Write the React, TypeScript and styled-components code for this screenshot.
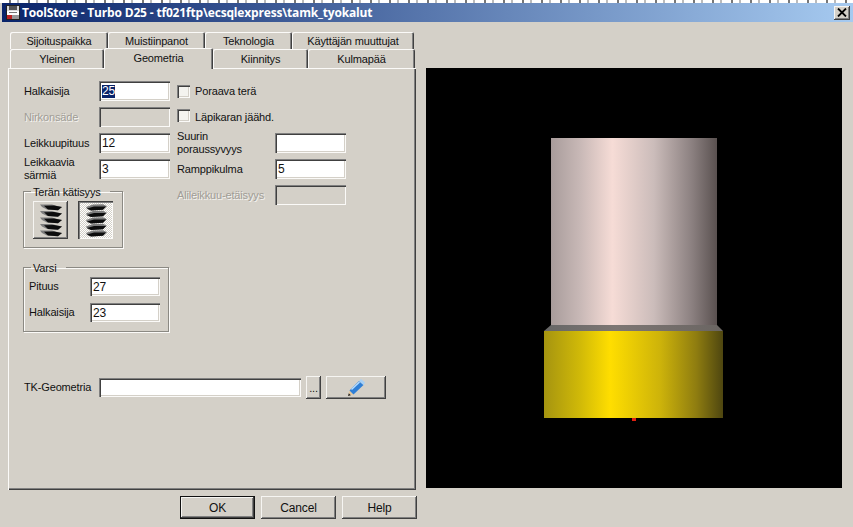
import React from "react";
import styled, { createGlobalStyle, css } from "styled-components";

const Global = createGlobalStyle`
  html, body { margin: 0; padding: 0; background: #d4d0c8; }
  * { box-sizing: border-box; }
`;

const FONT = `"Liberation Sans", Arial, sans-serif`;

const raised = css`
  box-shadow: inset -1px -1px 0 #404040, inset 1px 1px 0 #f6f5f2, inset -2px -2px 0 #808080, inset 2px 2px 0 #d4d0c8;
`;

const sunken = css`
  box-shadow: inset 1px 1px 0 #808080, inset 2px 2px 0 #404040, inset -1px -1px 0 #fbfaf8, inset -2px -2px 0 #d4d0c8;
`;

const Root = styled.div`
  width: 853px;
  height: 527px;
  overflow: hidden;
  background: #d4d0c8;
  font-family: ${FONT};
  font-size: 11px;
  letter-spacing: -0.15px;
  color: #111;
  display: flex;
  flex-direction: column;
`;

const TopStrip = styled.div`
  height: 3px;
  background: repeating-linear-gradient(90deg, #fff 0 9px, #777 9px 11px, #fff 11px 17px, #bbb 17px 19px);
  flex: none;
`;

const TitleBar = styled.div`
  height: 19px;
  flex: none;
  display: flex;
  align-items: center;
  margin-left: 2px;
  padding: 0 4px;
  background: linear-gradient(90deg, #0a246a 0%, #a6caf0 100%);
  color: #fff;
`;

const TitleText = styled.div`
  font-family: "Open Sans", sans-serif;
  font-size: 12px;
  letter-spacing: -0.17px;
  font-weight: 700;
  margin-left: 2px;
  white-space: nowrap;
  flex: 1;
`;

const CloseButton = styled.div`
  width: 16px;
  height: 14px;
  background: #d4d0c8;
  display: flex;
  align-items: center;
  justify-content: center;
  margin-right: -1px;
  ${raised}
`;

const Body = styled.div`
  flex: 1;
  display: flex;
  min-height: 0;
`;

const LeftPane = styled.div`
  width: 426px;
  flex: none;
  padding: 10px 0 0 8px;
`;

const TabRow = styled.div<{ $h: number }>`
  display: flex;
  height: ${(p) => p.$h}px;
  padding-left: 2px;
`;

const Tab = styled.div<{ $w: number; $active?: boolean }>`
  width: ${(p) => p.$w}px;
  flex: none;
  display: flex;
  align-items: center;
  justify-content: center;
  background: #d4d0c8;
  border-radius: 2px 2px 0 0;
  box-shadow: inset 1px 1px 0 #fbfaf8, inset -1px 0 0 #404040, inset -2px 0 0 #808080;
  white-space: nowrap;
  ${(p) =>
    p.$active &&
    css`
      height: 21px;
      margin-top: -1px;
      position: relative;
      z-index: 2;
      padding-bottom: 2px;
    `}
`;

const Panel = styled.div`
  width: 408px;
  height: 422px;
  padding: 13px 0 0 16px;
  background: #d4d0c8;
  box-shadow: inset 1px 1px 0 #fbfaf8, inset -1px -1px 0 #404040, inset -2px -2px 0 #808080;
`;

const Columns = styled.div`
  display: grid;
  grid-template-columns: 147px 170px;
  column-gap: 6px;
  align-items: start;
`;

const Column = styled.div`
  display: flex;
  flex-direction: column;
  gap: 6px;
`;

const Row = styled.div<{ $h?: number }>`
  display: flex;
  align-items: center;
  height: ${(p) => p.$h ?? 20}px;
`;

const Label = styled.div<{ $w: number; $disabled?: boolean }>`
  width: ${(p) => p.$w}px;
  flex: none;
  line-height: 13px;
  white-space: nowrap;
  ${(p) =>
    p.$disabled &&
    css`
      color: #a09d96;
      text-shadow: 1px 1px 0 #f4f3f0;
    `}
`;

const TextBox = styled.div<{ $w?: number; $h?: number; $disabled?: boolean }>`
  width: ${(p) => p.$w ?? 71}px;
  height: ${(p) => p.$h ?? 20}px;
  flex: none;
  padding: 3px 0 0 3px;
  line-height: 14px;
  font-size: 12px;
  background: ${(p) => (p.$disabled ? "#d4d0c8" : "#fff")};
  ${sunken}
`;

const Selected = styled.span`
  background: #0a246a;
  color: #fff;
  display: inline-block;
  line-height: 13px;
`;

const CheckRow = styled.div<{ $up?: number }>`
  display: flex;
  align-items: center;
  gap: 5px;
  height: 20px;
  & > div {
    margin-top: ${(p) => -(p.$up ?? 0)}px;
  }
`;

const CheckBox = styled.div`
  width: 13px;
  height: 13px;
  flex: none;
  background: #f4f3ef;
  ${sunken}
`;

const Group = styled.fieldset<{ $w: number; $h: number; $top: number }>`
  width: ${(p) => p.$w}px;
  height: ${(p) => p.$h}px;
  margin: ${(p) => p.$top}px 0 0 -1px;
  padding: 3px 0 0 9px;
  border: 1px solid #8b8983;
  border-radius: 0;
  box-shadow: 1px 1px 0 #fbfaf8, inset 1px 1px 0 #fbfaf8;
`;

const Legend = styled.legend`
  margin-left: -2px;
  padding: 1px 9px 0 2px;
  line-height: 12px;
`;

const IconRow = styled.div`
  display: flex;
  gap: 10px;
`;

const IconToggle = styled.div<{ $pressed?: boolean }>`
  width: 35px;
  height: 38px;
  display: flex;
  align-items: center;
  justify-content: center;
  ${(p) =>
    p.$pressed
      ? css`
          background: repeating-conic-gradient(#fff 0 25%, #d4d0c8 0 50%) 0 0 / 2px 2px;
          box-shadow: inset 1px 1px 0 #404040, inset 2px 2px 0 #808080, inset -1px -1px 0 #fbfaf8;
        `
      : raised}
`;

const VarsiRows = styled.div`
  display: flex;
  flex-direction: column;
  gap: 7px;
  margin-left: -4px;
`;

const BottomRow = styled.div`
  display: flex;
  align-items: center;
  height: 23px;
  margin-top: 44px;
`;

const SmallButton = styled.div<{ $w: number; $ml: number }>`
  width: ${(p) => p.$w}px;
  height: 23px;
  margin-left: ${(p) => p.$ml}px;
  display: flex;
  align-items: center;
  justify-content: center;
  ${raised}
`;

const Footer = styled.div`
  width: 409px;
  margin-top: 6px;
  display: flex;
  justify-content: flex-end;
  gap: 6px;
`;

const DialogButton = styled.div<{ $default?: boolean }>`
  width: 75px;
  height: 23px;
  display: flex;
  align-items: center;
  justify-content: center;
  font-size: 12px;
  ${raised}
  ${(p) =>
    p.$default &&
    css`
      border: 1px solid #111;
    `}
`;

const Viewport = styled.div`
  width: 416px;
  height: 420px;
  margin-top: 46px;
  background: #000;
  flex: none;
`;

const AppIcon = () => (
  <svg width="14" height="15" viewBox="0 0 14 15">
    <rect x="0.5" y="0.5" width="13" height="14" fill="#d8d8d8" stroke="#222" />
    <rect x="3" y="1" width="8" height="4" fill="#555" />
    <rect x="1" y="6" width="12" height="4" fill="#fff" />
    <rect x="3" y="7" width="8" height="1" fill="#777" />
    <rect x="1" y="10" width="5" height="4" fill="#b22" />
    <rect x="6" y="10" width="7" height="4" fill="#999" />
  </svg>
);

const CloseIcon = () => (
  <svg width="10" height="9" viewBox="0 0 10 9">
    <path d="M1 0.5 L9 8.5 M9 0.5 L1 8.5" stroke="#000" strokeWidth="1.8" />
  </svg>
);

const Helix = ({ flip }: { flip?: boolean }) => {
  const tops = [0, 6.5, 13, 19.5, 26];
  return (
    <svg width="24" height="33" viewBox="0 0 24 33">
      {tops.map((y) => (
        <g key={y} transform={`translate(0 ${y})`}>
          {flip ? (
            <>
              <path d="M2 3 L9 0.4 L19 0.2 L23 2.2 L19 5.8 L7 6.6 L3 5 Z" fill="#7c7c7c" />
              <path d="M3 4.4 L10 2.4 L22 2.6 L19 5.8 L7 6.6 Z" fill="#0c0c0c" />
            </>
          ) : (
            <>
              <path d="M1 0.4 L13 0.6 L18 2 L23 3 L19 6.2 L8 5.6 L3 3 Z" fill="#7c7c7c" />
              <path d="M5 1.8 L15 1.6 L23 3 L19 6.2 L9 5.6 Z" fill="#0c0c0c" />
            </>
          )}
        </g>
      ))}
    </svg>
  );
};

const Pencil = () => (
  <svg width="20" height="20" viewBox="0 0 20 20">
    <path d="M2 18 L3.5 12.5 L7.5 16.5 Z" fill="#e4c9a0" />
    <path d="M2 18 L2.8 15.2 L4.8 17.2 Z" fill="#222" />
    <path d="M3.5 12.5 L13 3 L17.5 7 L7.5 16.5 Z" fill="#2f7fd6" />
    <path d="M5.5 11.5 L13.5 4" stroke="#b4dcff" strokeWidth="1.5" />
    <path d="M13 3 L15 1 L19 4.6 L17.5 7 Z" fill="#a8d0f4" />
  </svg>
);

const Tool = () => (
  <svg width="416" height="420" viewBox="0 0 416 420" role="img" aria-label="Tool preview">
    <defs>
      <linearGradient id="shank" x1="0" x2="1" y1="0" y2="0">
        <stop offset="0" stopColor="#a89c9b" />
        <stop offset="0.18" stopColor="#c9b9b7" />
        <stop offset="0.37" stopColor="#f6dcd6" />
        <stop offset="0.62" stopColor="#cbbcba" />
        <stop offset="0.85" stopColor="#8b8080" />
        <stop offset="1" stopColor="#5a5150" />
      </linearGradient>
      <linearGradient id="chamfer" x1="0" x2="1" y1="0" y2="0">
        <stop offset="0" stopColor="#666" />
        <stop offset="0.4" stopColor="#7d7673" />
        <stop offset="1" stopColor="#6a6562" />
      </linearGradient>
      <linearGradient id="body" x1="0" x2="1" y1="0" y2="0">
        <stop offset="0" stopColor="#a59410" />
        <stop offset="0.2" stopColor="#d0b908" />
        <stop offset="0.37" stopColor="#ffde00" />
        <stop offset="0.65" stopColor="#cdb30a" />
        <stop offset="0.85" stopColor="#8f7d10" />
        <stop offset="1" stopColor="#4e4610" />
      </linearGradient>
    </defs>
    <rect x="125" y="70" width="166" height="187" fill="url(#shank)" />
    <polygon points="125,257 291,257 297,263 118,263" fill="url(#chamfer)" />
    <rect x="118" y="263" width="179" height="87" fill="url(#body)" />
    <rect x="206" y="350" width="4" height="3" fill="#e02010" />
  </svg>
);

export default function App() {
  return (
    <Root>
      <Global />
      <TopStrip />
      <TitleBar>
        <AppIcon />
        <TitleText>ToolStore - Turbo D25 - tf021ftp\ecsqlexpress\tamk_tyokalut</TitleText>
        <CloseButton>
          <CloseIcon />
        </CloseButton>
      </TitleBar>
      <Body>
        <LeftPane>
          <TabRow $h={17}>
            <Tab $w={98}>Sijoituspaikka</Tab>
            <Tab $w={97}>Muistiinpanot</Tab>
            <Tab $w={87}>Teknologia</Tab>
            <Tab $w={122}>Käyttäjän muuttujat</Tab>
          </TabRow>
          <TabRow $h={19}>
            <Tab $w={94}>Yleinen</Tab>
            <Tab $w={109} $active>
              Geometria
            </Tab>
            <Tab $w={95}>Kiinnitys</Tab>
            <Tab $w={107}>Kulmapää</Tab>
          </TabRow>
          <Panel>
            <Columns>
              <Column>
                <Row>
                  <Label $w={75}>Halkaisija</Label>
                  <TextBox>
                    <Selected>25</Selected>
                  </TextBox>
                </Row>
                <Row>
                  <Label $w={75} $disabled>
                    Nirkonsäde
                  </Label>
                  <TextBox $disabled />
                </Row>
                <Row>
                  <Label $w={75}>Leikkuupituus</Label>
                  <TextBox>12</TextBox>
                </Row>
                <Row>
                  <Label $w={75}>
                    Leikkaavia
                    <br />
                    särmiä
                  </Label>
                  <TextBox>3</TextBox>
                </Row>
                <Group $w={100} $h={63} $top={0}>
                  <Legend>Terän kätisyys</Legend>
                  <IconRow>
                    <IconToggle>
                      <Helix />
                    </IconToggle>
                    <IconToggle $pressed>
                      <Helix flip />
                    </IconToggle>
                  </IconRow>
                </Group>
              </Column>
              <Column>
                <CheckRow>
                  <CheckBox />
                  Poraava terä
                </CheckRow>
                <CheckRow $up={3}>
                  <CheckBox />
                  Läpikaran jäähd.
                </CheckRow>
                <Row>
                  <Label $w={98}>
                    Suurin
                    <br />
                    poraussyvyys
                  </Label>
                  <TextBox />
                </Row>
                <Row>
                  <Label $w={98}>Ramppikulma</Label>
                  <TextBox>5</TextBox>
                </Row>
                <Row>
                  <Label $w={98} $disabled>
                    Alileikkuu-etäisyys
                  </Label>
                  <TextBox $disabled />
                </Row>
              </Column>
            </Columns>
            <Group $w={146} $h={71} $top={13}>
              <Legend>Varsi</Legend>
              <VarsiRows>
                <Row $h={19}>
                  <Label $w={61}>Pituus</Label>
                  <TextBox $h={19} $w={70}>27</TextBox>
                </Row>
                <Row $h={19}>
                  <Label $w={61}>Halkaisija</Label>
                  <TextBox $h={19} $w={70}>23</TextBox>
                </Row>
              </VarsiRows>
            </Group>
            <BottomRow>
              <Label $w={75}>TK-Geometria</Label>
              <TextBox $w={202} $h={19} />
              <SmallButton $w={15} $ml={5}>
                ...
              </SmallButton>
              <SmallButton $w={60} $ml={5}>
                <Pencil />
              </SmallButton>
            </BottomRow>
          </Panel>
          <Footer>
            <DialogButton $default>OK</DialogButton>
            <DialogButton>Cancel</DialogButton>
            <DialogButton>Help</DialogButton>
          </Footer>
        </LeftPane>
        <Viewport>
          <Tool />
        </Viewport>
      </Body>
    </Root>
  );
}
